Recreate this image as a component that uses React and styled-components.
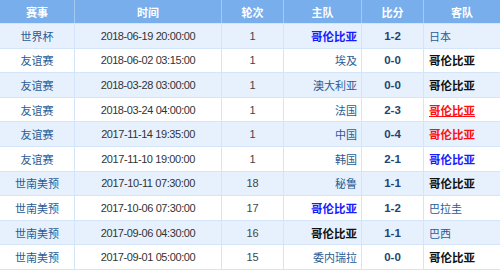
import React from "react";
import styled, { createGlobalStyle } from "styled-components";

const Global = createGlobalStyle`
  html, body { margin: 0; padding: 0; background: #fff; }
  body { font-family: "Liberation Sans", "Noto Sans CJK SC", sans-serif; }
`;

const COLS = "75px 147px 62px 78px 62px 76px";

const Table = styled.div`
  width: 500px;
  display: flex;
  flex-direction: column;
`;

const HeadRow = styled.div`
  display: grid;
  grid-template-columns: ${COLS};
  height: 24px;
  box-sizing: border-box;
  background: #78aeec;
  border-bottom: 1px solid #d4e5f9;
`;

const HeadCell = styled.div`
  display: flex;
  align-items: center;
  justify-content: center;
  color: #fff;
  font-weight: bold;
  font-size: 11px;
  font-family: "Noto Sans CJK SC", sans-serif;
  border-right: ${(p) => (p.$last ? "none" : "1px solid #a6c9f3")};
  box-sizing: border-box;
`;

const Row = styled.div`
  display: grid;
  grid-template-columns: ${COLS};
  height: 24.6px;
  box-sizing: border-box;
  background: ${(p) => (p.$alt ? "#e7f1fd" : "#ffffff")};
  border-bottom: 1px solid #d4e5f9;
`;

const Cell = styled.div`
  display: flex;
  align-items: center;
  justify-content: ${(p) =>
    p.$align === "right" ? "flex-end" : p.$align === "left" ? "flex-start" : "center"};
  padding: 0 ${(p) => (p.$align === "right" ? "4px" : "0")} 0 ${(p) => (p.$align === "left" ? "5px" : "0")};
  border-right: ${(p) => (p.$last ? "none" : "1px solid #d4e5f9")};
  box-sizing: border-box;
  font-size: 11px;
  font-family: "Noto Sans CJK SC", sans-serif;
  color: #2b5b94;
  white-space: nowrap;
  overflow: hidden;
`;

const TimeText = styled.span`
  font-family: "Liberation Sans", sans-serif;
  font-size: 11px;
  letter-spacing: -0.4px;
  color: #333;
`;

const RoundText = styled.span`
  font-family: "Liberation Sans", sans-serif;
  font-size: 11px;
  color: #444;
`;

const Score = styled.span`
  font-family: "Liberation Sans", sans-serif;
  font-weight: bold;
  font-size: 11.5px;
  color: #1f4472;
`;

const TEAM_COLORS = {
  plain: "#2b5b94",
  black: "#111111",
  blue: "#1a1aff",
  red: "#ff0f0f",
};

const Team = styled.span`
  font-family: "Noto Sans CJK SC", sans-serif;
  font-size: ${(p) => (p.$kind === "plain" ? "11px" : "11.5px")};
  font-weight: ${(p) => (p.$kind === "plain" ? "normal" : "bold")};
  color: ${(p) => TEAM_COLORS[p.$kind]};
  text-decoration: ${(p) => (p.$underline ? "underline" : "none")};
  text-underline-offset: 1px;
`;

const rows = [
  ["世界杯", "2018-06-19 20:00:00", "1", ["哥伦比亚", "blue"], "1-2", ["日本", "plain"]],
  ["友谊赛", "2018-06-02 03:15:00", "1", ["埃及", "plain"], "0-0", ["哥伦比亚", "black"]],
  ["友谊赛", "2018-03-28 03:00:00", "1", ["澳大利亚", "plain"], "0-0", ["哥伦比亚", "black"]],
  ["友谊赛", "2018-03-24 04:00:00", "1", ["法国", "plain"], "2-3", ["哥伦比亚", "red", true]],
  ["友谊赛", "2017-11-14 19:35:00", "1", ["中国", "plain"], "0-4", ["哥伦比亚", "red"]],
  ["友谊赛", "2017-11-10 19:00:00", "1", ["韩国", "plain"], "2-1", ["哥伦比亚", "blue"]],
  ["世南美预", "2017-10-11 07:30:00", "18", ["秘鲁", "plain"], "1-1", ["哥伦比亚", "black"]],
  ["世南美预", "2017-10-06 07:30:00", "17", ["哥伦比亚", "blue"], "1-2", ["巴拉圭", "plain"]],
  ["世南美预", "2017-09-06 04:30:00", "16", ["哥伦比亚", "black"], "1-1", ["巴西", "plain"]],
  ["世南美预", "2017-09-01 05:00:00", "15", ["委内瑞拉", "plain"], "0-0", ["哥伦比亚", "black"]],
];

const headers = ["赛事", "时间", "轮次", "主队", "比分", "客队"];

export default function App() {
  return (
    <>
      <Global />
      <Table>
        <HeadRow>
          {headers.map((h, i) => (
            <HeadCell key={h} $last={i === headers.length - 1}>
              {h}
            </HeadCell>
          ))}
        </HeadRow>
        {rows.map((r, i) => (
          <Row key={i} $alt={i % 2 === 0}>
            <Cell>{r[0]}</Cell>
            <Cell>
              <TimeText>{r[1]}</TimeText>
            </Cell>
            <Cell>
              <RoundText>{r[2]}</RoundText>
            </Cell>
            <Cell $align="right">
              <Team $kind={r[3][1]} $underline={r[3][2]}>{r[3][0]}</Team>
            </Cell>
            <Cell>
              <Score>{r[4]}</Score>
            </Cell>
            <Cell $align="left" $last>
              <Team $kind={r[5][1]} $underline={r[5][2]}>{r[5][0]}</Team>
            </Cell>
          </Row>
        ))}
      </Table>
    </>
  );
}
